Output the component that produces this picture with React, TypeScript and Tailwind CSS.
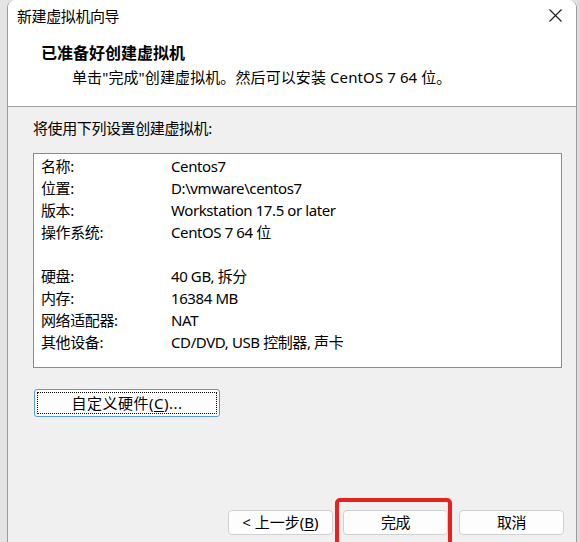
import React from 'react';

const rows: [string, string][] = [
  ['名称:', 'Centos7'],
  ['位置:', 'D:\\vmware\\centos7'],
  ['版本:', 'Workstation 17.5 or later'],
  ['操作系统:', 'CentOS 7 64 位'],
  ['', ''],
  ['硬盘:', '40 GB, 拆分'],
  ['内存:', '16384 MB'],
  ['网络适配器:', 'NAT'],
  ['其他设备:', 'CD/DVD, USB 控制器, 声卡'],
];

function WinButton({ children, className = '' }: { children: React.ReactNode; className?: string }) {
  return (
    <button
      className={`h-[25px] w-[105px] rounded-[4px] border border-[#d0d0d0] bg-[#fdfdfd] text-[15px] leading-none text-black ${className}`}
    >
      {children}
    </button>
  );
}

export default function App() {
  return (
    <div className="relative flex h-[542px] w-[580px] overflow-hidden bg-[#e4e4e4] font-['Noto_Sans','Noto_Sans_CJK_SC',sans-serif] tracking-[-0.4px] text-black">
      {/* Dialog */}
      <div className="ml-[7px] flex h-[560px] w-[570px] flex-col overflow-hidden rounded-tl-[8px] rounded-tr-[8px] border-x border-[#9c9c9c] bg-[#f0f0f0]">
        {/* Title + header */}
        <div className="h-[107px] border-b border-[#a0a0a0] bg-white">
          <div className="flex h-[32px] items-center justify-between pl-[9px] pr-[14px]">
            <span className="text-[15px]">新建虚拟机向导</span>
            <svg width="13" height="13" viewBox="0 0 13 13" className="mt-[-2px]">
              <path d="M0.5 0.5 L12.5 12.5 M12.5 0.5 L0.5 12.5" stroke="#1a1a1a" strokeWidth="1.1" />
            </svg>
          </div>
          <div className="mt-[11px] h-[20px] pl-[33px] text-[16px] font-bold leading-[20px] tracking-normal">已准备好创建虚拟机</div>
          <div className="mt-[3px] h-[22px] pl-[64px] text-[15px] leading-[22px] tracking-[0.1px]">
            单击"完成"创建虚拟机。然后可以安装 CentOS 7 64 位。
          </div>
        </div>

        {/* Body */}
        <div className="flex flex-1 flex-col pl-[25px] pt-[10px]">
          <div className="h-[22px] text-[15px] leading-[22px]">将使用下列设置创建虚拟机:</div>
          <div className="mt-[14px] h-[215px] w-[529px] border border-[#8c8c8c] bg-white pl-[7px] pt-[1px]">
            {rows.map(([label, value], i) => (
              <div key={i} className="flex h-[22px] text-[15px] leading-[22px]">
                <span className="w-[130px]">{label}</span>
                <span>{value}</span>
              </div>
            ))}
          </div>

          <button className="relative ml-[1px] mt-[21px] h-[28px] w-[186px] rounded-[3px] border border-[#5b9ad8] bg-[#fdfdfd] text-[15px] leading-none tracking-[0.5px]">
            <span className="absolute inset-[2px] rounded-[1px] border border-dotted border-black" />
            自定义硬件(<span className="underline underline-offset-2">C</span>)...
          </button>

          <div className="mt-[93px] flex pl-[195px]">
            <WinButton className="tracking-normal">
              &lt; 上一步(<span className="underline underline-offset-2">B</span>)
            </WinButton>
            <WinButton className="ml-[10px]">完成</WinButton>
            <WinButton className="ml-[11px]">取消</WinButton>
          </div>
        </div>
      </div>

      {/* Background window strip on the right */}
      <div className="h-full flex-1 bg-[#dcdcdc]" />

      {/* Red highlight annotation */}
      <div className="absolute left-[335px] top-[498px] h-[52px] w-[117px] rounded-[5px] border-4 border-[#e8231f]" />
    </div>
  );
}
